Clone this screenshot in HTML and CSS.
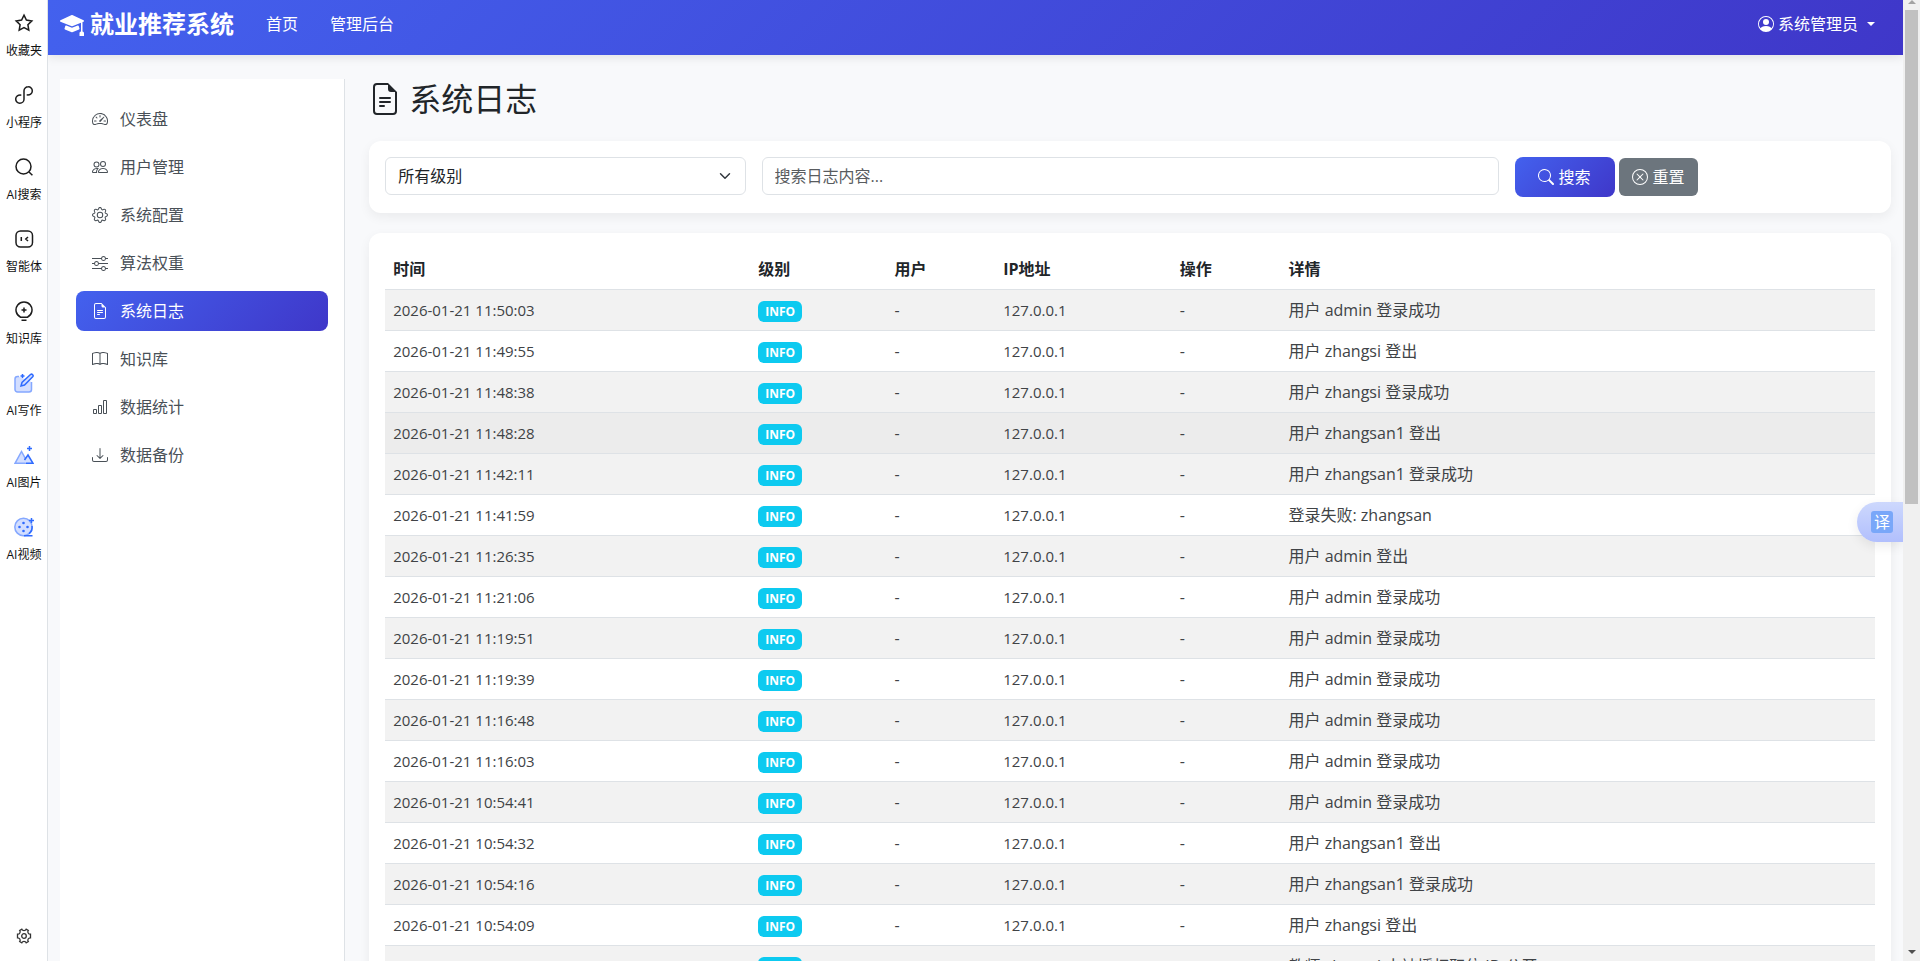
FILE: index.html
```
<!DOCTYPE html>
<html lang="zh-CN">
<head>
<meta charset="UTF-8">
<meta name="viewport" content="width=device-width, initial-scale=1.0">
<title>系统日志 - 就业推荐系统</title>
<link rel="stylesheet" href="styles.css">
</head>
<body>
<!-- icon set -->
<svg class="sprite" aria-hidden="true">
    <symbol id="i-cap" viewBox="0 0 16 16"><path d="M8.211 2.047a.5.5 0 0 0-.422 0l-7.5 3.5a.5.5 0 0 0 .025.917l7.5 3a.5.5 0 0 0 .372 0L14 7.14V13a1 1 0 0 0-1 1v2h3v-2a1 1 0 0 0-1-1V6.739l.686-.275a.5.5 0 0 0 .025-.917z"/><path d="M4.176 9.032a.5.5 0 0 0-.656.327l-.5 1.7a.5.5 0 0 0 .294.605l4.5 1.8a.5.5 0 0 0 .372 0l4.5-1.8a.5.5 0 0 0 .294-.605l-.5-1.7a.5.5 0 0 0-.656-.327L8 10.466z"/></symbol>
    <symbol id="i-speed" viewBox="0 0 16 16"><path d="M8 4a.5.5 0 0 1 .5.5V6a.5.5 0 0 1-1 0V4.5A.5.5 0 0 1 8 4M3.732 5.732a.5.5 0 0 1 .707 0l.915.914a.5.5 0 1 1-.708.708l-.914-.915a.5.5 0 0 1 0-.707M2 10a.5.5 0 0 1 .5-.5h1.586a.5.5 0 0 1 0 1H2.5A.5.5 0 0 1 2 10m9.5 0a.5.5 0 0 1 .5-.5h1.5a.5.5 0 0 1 0 1H12a.5.5 0 0 1-.5-.5m.754-4.246a.39.39 0 0 0-.527-.02L7.547 9.31a.91.91 0 1 0 1.302 1.258l3.434-4.297a.39.39 0 0 0-.029-.518z"/><path fill-rule="evenodd" d="M0 10a8 8 0 1 1 15.547 2.661c-.442 1.253-1.845 1.602-2.932 1.25C11.309 13.488 9.475 13 8 13c-1.474 0-3.31.488-4.615.911-1.087.352-2.49.003-2.932-1.25A8 8 0 0 1 0 10m8-7a7 7 0 0 0-6.603 9.329c.203.575.923.876 1.68.63C4.397 12.533 6.358 12 8 12s3.604.532 4.923.96c.757.245 1.477-.056 1.68-.631A7 7 0 0 0 8 3"/></symbol>
    <symbol id="i-people" viewBox="0 0 16 16"><path d="M15 14s1 0 1-1-1-4-5-4-5 3-5 4 1 1 1 1zm-7.978-1L7 12.996c.001-.264.167-1.03.76-1.72C8.312 10.629 9.282 10 11 10c1.717 0 2.687.63 3.24 1.276.593.69.758 1.457.76 1.72l-.008.002-.014.002zM11 7a2 2 0 1 0 0-4 2 2 0 0 0 0 4m3-2a3 3 0 1 1-6 0 3 3 0 0 1 6 0M6.936 9.28a6 6 0 0 0-1.23-.247A7 7 0 0 0 5 9c-4 0-5 3-5 4q0 1 1 1h4.216A2.24 2.24 0 0 1 5 13c0-1.01.377-2.042 1.09-2.904.243-.294.526-.569.846-.816M4.92 10A5.5 5.5 0 0 0 4 13H1c0-.26.164-1.03.76-1.724.545-.636 1.492-1.256 3.16-1.275ZM1.5 5.5a3 3 0 1 1 6 0 3 3 0 0 1-6 0m3-2a2 2 0 1 0 0 4 2 2 0 0 0 0-4"/></symbol>
    <symbol id="i-gear" viewBox="0 0 16 16"><path d="M8 4.754a3.246 3.246 0 1 0 0 6.492 3.246 3.246 0 0 0 0-6.492M5.754 8a2.246 2.246 0 1 1 4.492 0 2.246 2.246 0 0 1-4.492 0"/><path d="M9.796 1.343c-.527-1.79-3.065-1.79-3.592 0l-.094.319a.873.873 0 0 1-1.255.52l-.292-.16c-1.64-.892-3.433.902-2.54 2.541l.159.292a.873.873 0 0 1-.52 1.255l-.319.094c-1.79.527-1.79 3.065 0 3.592l.319.094a.873.873 0 0 1 .52 1.255l-.16.292c-.892 1.64.901 3.434 2.541 2.54l.292-.159a.873.873 0 0 1 1.255.52l.094.319c.527 1.79 3.065 1.79 3.592 0l.094-.319a.873.873 0 0 1 1.255-.52l.292.16c1.64.893 3.434-.902 2.54-2.541l-.159-.292a.873.873 0 0 1 .52-1.255l.319-.094c1.79-.527 1.79-3.065 0-3.592l-.319-.094a.873.873 0 0 1-.52-1.255l.16-.292c.893-1.64-.902-3.433-2.541-2.54l-.292.159a.873.873 0 0 1-1.255-.52zm-2.633.283c.246-.835 1.428-.835 1.674 0l.094.319a1.873 1.873 0 0 0 2.693 1.115l.291-.16c.764-.415 1.6.42 1.184 1.185l-.159.292a1.873 1.873 0 0 0 1.116 2.692l.318.094c.835.246.835 1.428 0 1.674l-.319.094a1.873 1.873 0 0 0-1.115 2.693l.16.291c.415.764-.42 1.6-1.185 1.184l-.291-.159a1.873 1.873 0 0 0-2.693 1.116l-.094.318c-.246.835-1.428.835-1.674 0l-.094-.319a1.873 1.873 0 0 0-2.692-1.115l-.292.16c-.764.415-1.6-.42-1.184-1.185l.159-.291A1.873 1.873 0 0 0 1.945 8.93l-.319-.094c-.835-.246-.835-1.428 0-1.674l.319-.094A1.873 1.873 0 0 0 3.06 4.377l-.16-.292c-.415-.764.42-1.6 1.185-1.184l.292.159a1.873 1.873 0 0 0 2.692-1.115z"/></symbol>
    <symbol id="i-sliders" viewBox="0 0 16 16"><path fill-rule="evenodd" d="M11.5 2a1.5 1.5 0 1 0 0 3 1.5 1.5 0 0 0 0-3M9.05 3a2.5 2.5 0 0 1 4.9 0H16v1h-2.05a2.5 2.5 0 0 1-4.9 0H0V3zM4.5 7a1.5 1.5 0 1 0 0 3 1.5 1.5 0 0 0 0-3M2.05 8a2.5 2.5 0 0 1 4.9 0H16v1H6.95a2.5 2.5 0 0 1-4.9 0H0V8zm9.45 4a1.5 1.5 0 1 0 0 3 1.5 1.5 0 0 0 0-3m-2.45 1a2.5 2.5 0 0 1 4.9 0H16v1h-2.05a2.5 2.5 0 0 1-4.9 0H0v-1z"/></symbol>
    <symbol id="i-file" viewBox="0 0 16 16"><path d="M5.5 7a.5.5 0 0 0 0 1h5a.5.5 0 0 0 0-1zM5 9.5a.5.5 0 0 1 .5-.5h5a.5.5 0 0 1 0 1h-5a.5.5 0 0 1-.5-.5m0 2a.5.5 0 0 1 .5-.5h2a.5.5 0 0 1 0 1h-2a.5.5 0 0 1-.5-.5"/><path d="M9.5 0H4a2 2 0 0 0-2 2v12a2 2 0 0 0 2 2h8a2 2 0 0 0 2-2V4.5zm0 1v2A1.5 1.5 0 0 0 11 4.5h2V14a1 1 0 0 1-1 1H4a1 1 0 0 1-1-1V2a1 1 0 0 1 1-1z"/></symbol>
    <symbol id="i-book" viewBox="0 0 16 16"><path d="M1 2.828c.885-.37 2.154-.769 3.388-.893 1.33-.134 2.458.063 3.112.752v9.746c-.935-.53-2.12-.603-3.213-.493-1.18.12-2.37.461-3.287.811zm7.5-.141c.654-.689 1.782-.886 3.112-.752 1.234.124 2.503.523 3.388.893v9.923c-.918-.35-2.107-.692-3.287-.81-1.094-.111-2.278-.039-3.213.492zM8 1.783C7.015.936 5.587.81 4.287.94c-1.514.153-3.042.672-3.994 1.105A.5.5 0 0 0 0 2.5v11a.5.5 0 0 0 .707.455c.882-.4 2.303-.881 3.68-1.02 1.409-.142 2.59.087 3.223.877a.5.5 0 0 0 .78 0c.633-.79 1.814-1.019 3.222-.877 1.378.139 2.8.62 3.681 1.02A.5.5 0 0 0 16 13.5v-11a.5.5 0 0 0-.293-.455c-.952-.433-2.48-.952-3.994-1.105C10.413.809 8.985.936 8 1.783"/></symbol>
    <symbol id="i-chart" viewBox="0 0 16 16"><path d="M4 11H2v3h2zm5-4H7v7h2zm5-5v12h-2V2zm-2-1a1 1 0 0 0-1 1v12a1 1 0 0 0 1 1h2a1 1 0 0 0 1-1V2a1 1 0 0 0-1-1zM6 7a1 1 0 0 1 1-1h2a1 1 0 0 1 1 1v7a1 1 0 0 1-1 1H7a1 1 0 0 1-1-1zm-5 4a1 1 0 0 1 1-1h2a1 1 0 0 1 1 1v3a1 1 0 0 1-1 1H2a1 1 0 0 1-1-1z"/></symbol>
    <symbol id="i-download" viewBox="0 0 16 16"><path d="M.5 9.9a.5.5 0 0 1 .5.5v2.5a1 1 0 0 0 1 1h12a1 1 0 0 0 1-1v-2.5a.5.5 0 0 1 1 0v2.5a2 2 0 0 1-2 2H2a2 2 0 0 1-2-2v-2.5a.5.5 0 0 1 .5-.5"/><path d="M7.646 11.854a.5.5 0 0 0 .708 0l3-3a.5.5 0 0 0-.708-.708L8.5 10.293V1.5a.5.5 0 0 0-1 0v8.793L5.354 8.146a.5.5 0 1 0-.708.708z"/></symbol>
    <symbol id="i-search" viewBox="0 0 16 16"><path d="M11.742 10.344a6.5 6.5 0 1 0-1.397 1.398h-.001q.044.06.098.115l3.85 3.85a1 1 0 0 0 1.415-1.414l-3.85-3.85a1 1 0 0 0-.115-.1zM12 6.5a5.5 5.5 0 1 1-11 0 5.5 5.5 0 0 1 11 0"/></symbol>
    <symbol id="i-reset" viewBox="0 0 16 16"><path d="M8 15A7 7 0 1 1 8 1a7 7 0 0 1 0 14m0 1A8 8 0 1 0 8 0a8 8 0 0 0 0 16"/><path d="M4.646 4.646a.5.5 0 0 1 .708 0L8 7.293l2.646-2.647a.5.5 0 0 1 .708.708L8.707 8l2.647 2.646a.5.5 0 0 1-.708.708L8 8.707l-2.646 2.647a.5.5 0 0 1-.708-.708L7.293 8 4.646 5.354a.5.5 0 0 1 0-.708"/></symbol>
    <symbol id="i-person" viewBox="0 0 16 16"><path d="M11 6a3 3 0 1 1-6 0 3 3 0 0 1 6 0"/><path fill-rule="evenodd" d="M0 8a8 8 0 1 1 16 0A8 8 0 0 1 0 8m8-7a7 7 0 0 0-5.468 11.37C3.242 11.226 4.805 10 8 10s4.757 1.225 5.468 2.37A7 7 0 0 0 8 1"/></symbol>
</svg>

<nav class="rail" aria-label="工具栏">
    <a href="#" class="rail-item">
        <svg class="rail-icon" viewBox="0 0 20 20"><path d="M10 2.2l2.4 4.900 5.400.8-3.900 3.800.9 5.400-4.800-2.500-4.800 2.500.9-5.400-3.900-3.800 5.400-.8z"/></svg>
        <span>收藏夹</span>
    </a>
    <a href="#" class="rail-item">
        <svg class="rail-icon" viewBox="0 0 20 20"><path d="M7.3 10.2C4.2 9.600 1.700 11.500 1.700 14.100a4 4 0 0 0 4.100 4.100c2.400 0 4.200-1.700 4.200-4V5.800c0-2.300 1.800-4 4.200-4a4 4 0 0 1 4.100 4.100c0 2.600-2.500 4.500-5.600 3.900"/></svg>
        <span>小程序</span>
    </a>
    <a href="#" class="rail-item">
        <svg class="rail-icon" viewBox="0 0 20 20"><circle cx="9.5" cy="9.5" r="7.5"/><path d="M15 15l3.400 3.300"/></svg>
        <span>AI搜索</span>
    </a>
    <a href="#" class="rail-item">
        <svg class="rail-icon" viewBox="0 0 20 20"><rect x="2" y="2" width="16.5" height="16" rx="4.5"/><path d="M7.300 8v4M14 8l-2.200 2L14 12"/></svg>
        <span>智能体</span>
    </a>
    <a href="#" class="rail-item">
        <svg class="rail-icon" viewBox="0 0 20 20"><path d="M6.600 16.200a8 8 0 1 1 6.800 0zM10 6.500v5M7.500 9h5M7.500 19.300h5"/></svg>
        <span>知识库</span>
    </a>
    <a href="#" class="rail-item">
        <svg class="rail-icon blue" viewBox="0 0 20 20"><path class="tint" d="M5 3.500H3.500A2.500 2.500 0 0 0 1 6v10.500A2.500 2.500 0 0 0 3.500 19H15a2.500 2.500 0 0 0 2.500-2.500V9"/><path class="pen" d="M7 13l1-3.500 8.500-8a1.600 1.600 0 0 1 2.200 2.300L10.500 12z"/><path d="M8.500 1v4M6.500 3h4"/></svg>
        <span>AI写作</span>
    </a>
    <a href="#" class="rail-item">
        <svg class="rail-icon blue" viewBox="0 0 20 20"><path class="tint" d="M1 18.300L7.500 6.500 14 18.300z"/><path class="pen" d="M10.500 15l3.500-5 5 8.300h-7"/><path d="M15.500 1v5M13 3.500h5"/></svg>
        <span>AI图片</span>
    </a>
    <a href="#" class="rail-item">
        <svg class="rail-icon blue" viewBox="0 0 20 20"><circle class="tint" cx="9.5" cy="10" r="8.7"/><path d="M18 9c.5 3-.7 5.800-3 7.600M10 18.800h8.500M17.500 1v5M15 3.500h5"/><g class="dots"><circle cx="9.5" cy="6" r="1.3"/><circle cx="9.5" cy="14" r="1.3"/><circle cx="5.5" cy="10" r="1.3"/><circle cx="13.5" cy="10" r="1.3"/></g></svg>
        <span>AI视频</span>
    </a>
    <button type="button" class="rail-settings" aria-label="设置">
        <svg viewBox="0 0 16 16"><path d="M5.800 1.200a2.400 2.400 0 0 0 4.400 0l2.100 1.200a2.400 2.400 0 0 0 2.200 3.800v3.600a2.400 2.400 0 0 0-2.200 3.800l-2.100 1.200a2.400 2.400 0 0 0-4.400 0l-2.100-1.200a2.400 2.400 0 0 0-2.200-3.800V6.200a2.400 2.400 0 0 0 2.200-3.800z"/><circle cx="8" cy="8" r="2.3"/></svg>
    </button>
</nav>

<div class="page">
    <header class="navbar">
        <a href="#" class="brand"><svg class="brand-icon"><use href="#i-cap"/></svg>就业推荐系统</a>
        <a href="#" class="nav-link">首页</a>
        <a href="#" class="nav-link">管理后台</a>
        <button type="button" class="user-menu"><svg class="icon"><use href="#i-person"/></svg>系统管理员<span class="caret"></span></button>
    </header>

    <div class="layout">
        <aside class="sidebar">
            <a href="#" class="side-link"><svg class="icon"><use href="#i-speed"/></svg>仪表盘</a>
            <a href="#" class="side-link"><svg class="icon"><use href="#i-people"/></svg>用户管理</a>
            <a href="#" class="side-link"><svg class="icon"><use href="#i-gear"/></svg>系统配置</a>
            <a href="#" class="side-link"><svg class="icon"><use href="#i-sliders"/></svg>算法权重</a>
            <a href="#" class="side-link active"><svg class="icon"><use href="#i-file"/></svg>系统日志</a>
            <a href="#" class="side-link"><svg class="icon"><use href="#i-book"/></svg>知识库</a>
            <a href="#" class="side-link"><svg class="icon"><use href="#i-chart"/></svg>数据统计</a>
            <a href="#" class="side-link"><svg class="icon"><use href="#i-download"/></svg>数据备份</a>
        </aside>

        <main class="main">
            <h2 class="title"><svg class="title-icon"><use href="#i-file"/></svg>系统日志</h2>

            <form class="card filter">
                <select class="field select" aria-label="日志级别">
                    <option>所有级别</option>
                    <option>INFO</option>
                    <option>WARNING</option>
                    <option>ERROR</option>
                </select>
                <input type="text" class="field" aria-label="搜索日志内容" placeholder="搜索日志内容...">
                <div class="actions">
                    <button type="submit" class="btn btn-primary"><svg class="icon"><use href="#i-search"/></svg>搜索</button>
                    <button type="reset" class="btn btn-secondary"><svg class="icon"><use href="#i-reset"/></svg>重置</button>
                </div>
            </form>

            <div class="card">
                <table class="table">
                    <thead>
                        <tr><th class="col-time">时间</th><th class="col-level">级别</th><th class="col-user">用户</th><th class="col-ip">IP地址</th><th class="col-action">操作</th><th>详情</th></tr>
                    </thead>
                    <tbody>
                        <tr><td class="num">2026-01-21 11:50:03</td><td><span class="badge">INFO</span></td><td>-</td><td class="num">127.0.0.1</td><td>-</td><td>用户 admin 登录成功</td></tr>
                        <tr><td class="num">2026-01-21 11:49:55</td><td><span class="badge">INFO</span></td><td>-</td><td class="num">127.0.0.1</td><td>-</td><td>用户 zhangsi 登出</td></tr>
                        <tr><td class="num">2026-01-21 11:48:38</td><td><span class="badge">INFO</span></td><td>-</td><td class="num">127.0.0.1</td><td>-</td><td>用户 zhangsi 登录成功</td></tr>
                        <tr class="hover"><td class="num">2026-01-21 11:48:28</td><td><span class="badge">INFO</span></td><td>-</td><td class="num">127.0.0.1</td><td>-</td><td>用户 zhangsan1 登出</td></tr>
                        <tr><td class="num">2026-01-21 11:42:11</td><td><span class="badge">INFO</span></td><td>-</td><td class="num">127.0.0.1</td><td>-</td><td>用户 zhangsan1 登录成功</td></tr>
                        <tr><td class="num">2026-01-21 11:41:59</td><td><span class="badge">INFO</span></td><td>-</td><td class="num">127.0.0.1</td><td>-</td><td>登录失败: zhangsan</td></tr>
                        <tr><td class="num">2026-01-21 11:26:35</td><td><span class="badge">INFO</span></td><td>-</td><td class="num">127.0.0.1</td><td>-</td><td>用户 admin 登出</td></tr>
                        <tr><td class="num">2026-01-21 11:21:06</td><td><span class="badge">INFO</span></td><td>-</td><td class="num">127.0.0.1</td><td>-</td><td>用户 admin 登录成功</td></tr>
                        <tr><td class="num">2026-01-21 11:19:51</td><td><span class="badge">INFO</span></td><td>-</td><td class="num">127.0.0.1</td><td>-</td><td>用户 admin 登录成功</td></tr>
                        <tr><td class="num">2026-01-21 11:19:39</td><td><span class="badge">INFO</span></td><td>-</td><td class="num">127.0.0.1</td><td>-</td><td>用户 admin 登录成功</td></tr>
                        <tr><td class="num">2026-01-21 11:16:48</td><td><span class="badge">INFO</span></td><td>-</td><td class="num">127.0.0.1</td><td>-</td><td>用户 admin 登录成功</td></tr>
                        <tr><td class="num">2026-01-21 11:16:03</td><td><span class="badge">INFO</span></td><td>-</td><td class="num">127.0.0.1</td><td>-</td><td>用户 admin 登录成功</td></tr>
                        <tr><td class="num">2026-01-21 10:54:41</td><td><span class="badge">INFO</span></td><td>-</td><td class="num">127.0.0.1</td><td>-</td><td>用户 admin 登录成功</td></tr>
                        <tr><td class="num">2026-01-21 10:54:32</td><td><span class="badge">INFO</span></td><td>-</td><td class="num">127.0.0.1</td><td>-</td><td>用户 zhangsan1 登出</td></tr>
                        <tr><td class="num">2026-01-21 10:54:16</td><td><span class="badge">INFO</span></td><td>-</td><td class="num">127.0.0.1</td><td>-</td><td>用户 zhangsan1 登录成功</td></tr>
                        <tr><td class="num">2026-01-21 10:54:09</td><td><span class="badge">INFO</span></td><td>-</td><td class="num">127.0.0.1</td><td>-</td><td>用户 zhangsi 登出</td></tr>
                        <tr><td class="num">2026-01-21 10:53:40</td><td><span class="badge">INFO</span></td><td>-</td><td class="num">127.0.0.1</td><td>-</td><td>教师 zhangsi 未被授权职位 ID 公开</td></tr>
                    </tbody>
                </table>
            </div>
        </main>
    </div>

    <button type="button" class="translate"><span>译</span></button>
</div>

<div class="scrollbar" aria-hidden="true">
    <span class="arrow-up"></span>
    <span class="thumb"></span>
    <span class="arrow-down"></span>
</div>
</body>
</html>
```
FILE: styles.css
```
* {
    box-sizing: border-box;
}
body {
    display: flex;
    height: 100vh;
    margin: 0;
    overflow: hidden;
    font-family: "Open Sans", "Noto Sans CJK SC", sans-serif;
    font-size: 16px;
    line-height: 24px;
    color: #212529;
    background-color: #f8f9fb;
}
a {
    color: inherit;
    text-decoration: none;
}
button, input, select {
    font: inherit;
}
button {
    cursor: pointer;
}
.sprite {
    display: none;
}
.icon {
    width: 16px;
    height: 16px;
    flex: none;
    fill: currentColor;
}

/* left tool rail */
.rail {
    display: flex;
    flex-direction: column;
    gap: 26px;
    width: 48px;
    flex: none;
    padding: 13px 0 17px;
    background-color: #fff;
    border-right: 1px solid #dee2e6;
    font-size: 12px;
    line-height: 16px;
    color: #111;
}
.rail-item {
    display: flex;
    flex-direction: column;
    align-items: center;
    gap: 10px;
    height: 46px;
    padding-left: 1px;
    white-space: nowrap;
}
.rail-icon {
    width: 20px;
    height: 20px;
    flex: none;
    fill: none;
    stroke: #1c1c1c;
    stroke-width: 1.5;
}
.rail-icon.blue {
    stroke: #2f6bff;
}
.rail-icon .tint {
    fill: #d3deff;
    stroke: #85a8ff;
}
.rail-icon .pen {
    fill: #d3deff;
}
.rail-icon .dots {
    fill: #2f6bff;
    stroke: none;
}
.rail-settings {
    margin: auto auto 0;
    padding: 0;
    border: none;
    background: none;
}
.rail-settings svg {
    display: block;
    width: 16px;
    height: 16px;
    fill: none;
    stroke: #333;
    stroke-width: 1.3;
}

.page {
    position: relative;
    flex: 1;
    min-width: 0;
    overflow: hidden;
}

/* top navbar */
.navbar {
    display: flex;
    align-items: center;
    height: 55px;
    padding: 0 12px 7px;
    color: #fff;
    background: linear-gradient(135deg, #4361ee, #3f37c9);
    box-shadow: 0 2px 10px rgba(0, 0, 0, 0.1);
}
.brand {
    display: flex;
    align-items: center;
    gap: 6px;
    margin-right: 16px;
    font-size: 24px;
    font-weight: 700;
}
.brand-icon {
    width: 24px;
    height: 24px;
    fill: currentColor;
}
.nav-link {
    padding: 8px 16px;
}
.user-menu {
    display: flex;
    align-items: center;
    gap: 4px;
    margin-left: auto;
    padding: 8px 16px;
    border: none;
    color: #fff;
    background: none;
}
.caret {
    margin-left: 5px;
    border: 4px solid transparent;
    border-top-color: #fff;
    border-bottom: none;
}

.layout {
    display: flex;
    padding: 24px 12px;
}
.sidebar {
    display: flex;
    flex-direction: column;
    gap: 8px;
    width: calc((100% + 24px) / 6 - 24px);
    flex: none;
    min-height: calc(100vh - 79px);
    padding: 20px 16px;
    background-color: #fff;
    border-right: 1px solid #dee2e6;
}
.side-link {
    display: flex;
    align-items: center;
    gap: 12px;
    padding: 8px 16px;
    border-radius: 8px;
    color: #495057;
}
.side-link.active {
    color: #fff;
    background: linear-gradient(135deg, #4361ee, #3f37c9);
}
.main {
    flex: 1;
    min-width: 0;
    margin-left: 24px;
}
.title {
    display: flex;
    align-items: center;
    gap: 8px;
    margin: 0 0 22px;
    font-size: 32px;
    font-weight: 400;
    line-height: 40px;
}
.title-icon {
    width: 32px;
    height: 32px;
    fill: currentColor;
}
.card {
    margin-bottom: 20px;
    padding: 16px;
    background-color: #fff;
    border-radius: 12px;
    box-shadow: 0 4px 12px rgba(0, 0, 0, 0.06);
}

/* filter bar */
.filter {
    display: grid;
    grid-template-columns: calc((100% + 16px) / 4 - 16px) calc((100% + 16px) / 2 - 16px) 1fr;
    gap: 16px;
}
.field {
    width: 100%;
    height: 38px;
    padding: 6px 12px;
    border: 1px solid #dee2e6;
    border-radius: 6px;
    color: #212529;
    background-color: #fff;
}
.field::placeholder {
    color: #595c5f;
}
.select {
    appearance: none;
    background-image: url("data:image/svg+xml,%3csvg xmlns='http://www.w3.org/2000/svg' viewBox='0 0 16 16'%3e%3cpath fill='none' stroke='%23343a40' stroke-linecap='round' stroke-linejoin='round' stroke-width='2' d='m2 5 6 6 6-6'/%3e%3c/svg%3e");
    background-repeat: no-repeat;
    background-position: right 12px center;
    background-size: 16px 12px;
}
.actions {
    display: flex;
    align-items: center;
    gap: 4px;
}
.btn {
    display: flex;
    align-items: center;
    gap: 5px;
    padding: 7px 13px;
    border: none;
    border-radius: 6px;
    color: #fff;
}
.btn-primary {
    padding: 8px 24px 8px 23px;
    border-radius: 8px;
    background: linear-gradient(135deg, #4361ee, #3f37c9);
}
.btn-secondary {
    background-color: #6c757d;
}

/* log table */
.table {
    width: 100%;
    table-layout: fixed;
    border-collapse: separate;
    border-spacing: 0;
}
.table th, .table td {
    height: 41px;
    padding: 0 8px;
    border-bottom: 1px solid #dee2e6;
    text-align: left;
    white-space: nowrap;
}
.table th {
    font-weight: 700;
}
.table td {
    color: #404346;
}
.table .num {
    font-size: 15px;
}
.table tbody tr:nth-child(odd) {
    background-color: #f2f2f2;
}
.table tbody tr.hover, .table tbody tr:hover {
    background-color: #ececec;
}
.col-time {
    width: 24.5%;
}
.col-level {
    width: 9.15%;
}
.col-user, .col-action {
    width: 7.3%;
}
.col-ip {
    width: 11.85%;
}
.badge {
    display: inline-block;
    padding: 0 7px;
    border-radius: 6px;
    color: #fff;
    background-color: #0dcaf0;
    font-size: 12px;
    font-weight: 700;
    line-height: 21px;
    vertical-align: middle;
}

/* floating translate tab */
.translate {
    position: absolute;
    right: 0;
    top: 502px;
    display: flex;
    align-items: center;
    width: 46px;
    height: 40px;
    padding: 0 0 0 14px;
    border: none;
    border-radius: 20px 0 0 20px;
    background: linear-gradient(#cdd8fd, #b1bffd);
    box-shadow: 0 4px 12px rgba(0, 0, 0, 0.08);
}
.translate span {
    width: 22px;
    height: 22px;
    border-radius: 3px;
    color: #fff;
    background-color: #79a7f9;
    line-height: 22px;
}

.scrollbar {
    display: flex;
    flex-direction: column;
    align-items: center;
    width: 17px;
    flex: none;
    padding-bottom: 7px;
    background-color: #f0f0f0;
}
.arrow-up {
    border: 4px solid transparent;
    border-top: none;
    border-bottom-color: #a3a3a3;
}
.thumb {
    width: 13px;
    height: 494px;
    margin-top: 6px;
    background-color: #c1c1c1;
}
.arrow-down {
    margin-top: auto;
    border: 4px solid transparent;
    border-top-color: #505050;
    border-bottom: none;
}
```
